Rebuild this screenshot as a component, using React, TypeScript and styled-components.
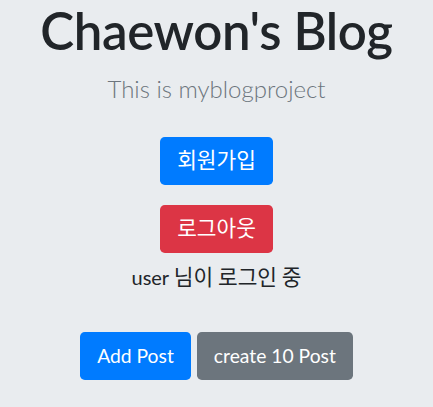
import React from "react";
import styled, { createGlobalStyle } from "styled-components";

const Global = createGlobalStyle`
  html, body { margin: 0; padding: 0; background: #e9ecef; }
  body {
    font-family: Lato, "Noto Sans CJK KR", sans-serif;
    color: #212529;
  }
`;

const Page = styled.div`
  display: flex;
  flex-direction: column;
  align-items: center;
  text-align: center;
`;

const Title = styled.h1`
  margin: 0;
  font-family: Lato, sans-serif;
  font-size: 51px;
  font-weight: 600;
  letter-spacing: -0.4px;
  line-height: 62px;
  color: #212529;
`;

const Lead = styled.p`
  margin: 12px 0 0;
  font-size: 24px;
  font-weight: 300;
  line-height: 30px;
  color: #6c757d;
`;

const Stack = styled.div`
  display: flex;
  flex-direction: column;
  align-items: center;
  gap: 20px;
  margin-top: 33px;
`;

const Row = styled.div`
  display: flex;
  gap: 6px;
  margin-top: 40px;
`;

const Button = styled.button<{ $variant: "primary" | "danger" | "secondary" }>`
  font-family: Lato, "Noto Sans CJK KR", sans-serif;
  font-size: 19.3px;
  line-height: 30px;
  padding: 8px 16px;
  border: 1px solid transparent;
  border-radius: 4.8px;
  color: #fff;
  cursor: pointer;
  background: ${(p) =>
    p.$variant === "primary" ? "#007bff" : p.$variant === "danger" ? "#dc3545" : "#6c757d"};
`;

const Hangul = styled.span`
  font-family: "Noto Sans CJK KR", sans-serif;
  font-size: 21.4px;
  line-height: 1;
`;

const Status = styled.p`
  margin: 9px 0 0;
  font-size: 20px;
  line-height: 30px;
`;

export default function App() {
  return (
    <>
      <Global />
      <Page>
        <Title>Chaewon's Blog</Title>
        <Lead>This is myblogproject</Lead>
        <Stack>
          <Button $variant="primary"><Hangul>회원가입</Hangul></Button>
          <Button $variant="danger"><Hangul>로그아웃</Hangul></Button>
        </Stack>
        <Status>user <Hangul>님이 로그인 중</Hangul></Status>
        <Row>
          <Button $variant="primary">Add Post</Button>
          <Button $variant="secondary">create 10 Post</Button>
        </Row>
      </Page>
    </>
  );
}
